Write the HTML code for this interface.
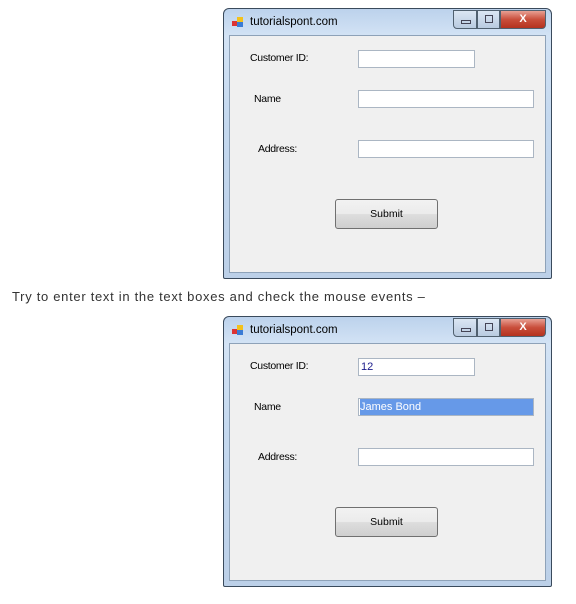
<!DOCTYPE html>
<html><head><style>
body{margin:0;background:#fff;width:576px;height:604px;position:relative;overflow:hidden;font-family:"Liberation Sans",sans-serif}
.win{position:absolute;left:223px;width:327px;height:269px;border:1px solid #3a4a5c;border-radius:6px 6px 2px 2px;background:linear-gradient(180deg,#bcd2ec 0%,#d3e3f5 10%,#c5d9ef 40%,#bcd0e8 100%)}
.title{position:absolute;left:26px;top:7px;font-size:11.5px;color:#000}
.ico{position:absolute;left:8px;top:8px;width:12px;height:11px}
.ico i{position:absolute;width:6px;height:5px}
.client{position:absolute;left:5px;top:26px;width:315px;height:236px;background:#f0f0f0;border:1px solid #8ea2b8}
.lbl{position:absolute;font-size:10.5px;color:#000;letter-spacing:-0.3px}
.tb{position:absolute;background:#fff;border:1px solid #abb6c3;height:16px;font-size:11px;line-height:16px;padding-left:2px;box-sizing:content-box}
.btn{position:absolute;left:105px;top:163px;width:101px;height:28px;border:1px solid #707070;border-radius:3px;background:linear-gradient(#f2f2f2,#ebebeb 50%,#dddddd 51%,#cfcfcf);font-size:10.5px;text-align:center;line-height:28px}
.wb{position:absolute;top:1px;height:17px;border:1px solid #50606f;background:linear-gradient(#dbe6f3,#b9cbe0)}
.cls{background:linear-gradient(#e8a093,#c94e3b 50%,#b4321f);border-radius:0 0 4px 0;color:#fff;font-weight:bold;font-size:11px;text-align:center;line-height:16px}
p{position:absolute;left:12px;top:289px;margin:0;font-size:13px;letter-spacing:0.7px;color:#333}
</style></head><body>

<div class="win" style="top:8px">
 <div class="ico"><i style="left:0;top:4px;background:#d33"></i><i style="left:5px;top:0;background:#f3c11b"></i><i style="left:5px;top:5px;background:#3a7bd5"></i></div>
 <div class="title">tutorialspont.com</div>
 <div class="wb" style="left:229px;width:22px;border-radius:0 0 0 4px"><div style="position:absolute;left:7px;top:9px;width:8px;height:2px;border:1px solid #445"></div></div>
 <div class="wb" style="left:253px;width:21px"><div style="position:absolute;left:7px;top:4px;width:6px;height:6px;border:1px solid #445"></div></div>
 <div class="wb cls" style="left:276px;width:44px">X</div>
 <div class="client">
  <div class="lbl" style="left:20px;top:16px">Customer ID:</div>
  <div class="tb" style="left:128px;top:14px;width:113px"></div>
  <div class="lbl" style="left:24px;top:57px">Name</div>
  <div class="tb" style="left:128px;top:54px;width:172px"></div>
  <div class="lbl" style="left:28px;top:107px">Address:</div>
  <div class="tb" style="left:128px;top:104px;width:172px"></div>
  <div class="btn">Submit</div>
 </div>
</div>

<p>Try to enter text in the text boxes and check the mouse events –</p>

<div class="win" style="top:316px">
 <div class="ico"><i style="left:0;top:4px;background:#d33"></i><i style="left:5px;top:0;background:#f3c11b"></i><i style="left:5px;top:5px;background:#3a7bd5"></i></div>
 <div class="title">tutorialspont.com</div>
 <div class="wb" style="left:229px;width:22px;border-radius:0 0 0 4px"><div style="position:absolute;left:7px;top:9px;width:8px;height:2px;border:1px solid #445"></div></div>
 <div class="wb" style="left:253px;width:21px"><div style="position:absolute;left:7px;top:4px;width:6px;height:6px;border:1px solid #445"></div></div>
 <div class="wb cls" style="left:276px;width:44px">X</div>
 <div class="client">
  <div class="lbl" style="left:20px;top:16px">Customer ID:</div>
  <div class="tb" style="left:128px;top:14px;width:113px;color:#1a1a8a">12</div>
  <div class="lbl" style="left:24px;top:57px">Name</div>
  <div class="tb" style="left:128px;top:54px;width:172px"><span style="display:block;background:#6699e8;color:#fff;margin-left:-1px;width:173px">James Bond</span></div>
  <div class="lbl" style="left:28px;top:107px">Address:</div>
  <div class="tb" style="left:128px;top:104px;width:172px"></div>
  <div class="btn">Submit</div>
 </div>
</div>
</body></html>
